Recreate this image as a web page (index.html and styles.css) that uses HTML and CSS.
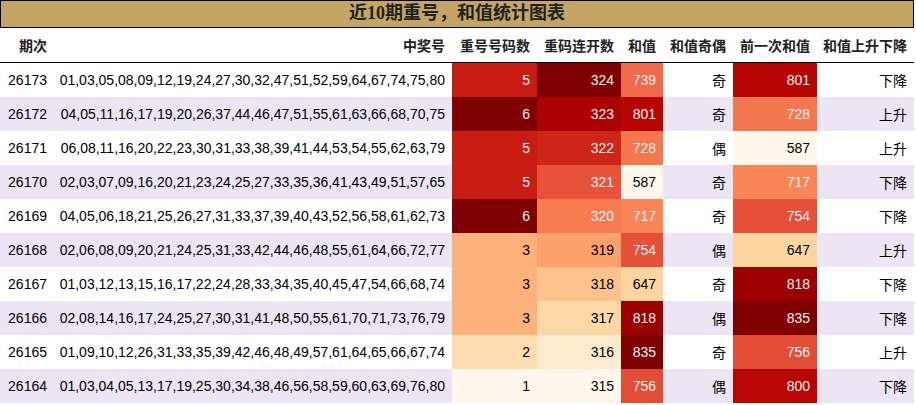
FILE: index.html
```html
<!DOCTYPE html>
<html lang="zh">
<head>
<meta charset="utf-8">
<title>近10期重号，和值统计图表</title>
<link rel="stylesheet" href="styles.css">
</head>
<body>
<div class="wrap">
  <div class="title">近10期重号，和值统计图表</div>
  <table class="stats">
    <colgroup>
      <col class="c-qi"><col class="c-num"><col class="c-rep"><col class="c-run"><col class="c-sum"><col class="c-odd"><col class="c-prev"><col class="c-trend">
    </colgroup>
    <thead>
      <tr><th>期次</th><th>中奖号</th><th>重号号码数</th><th>重码连开数</th><th>和值</th><th>和值奇偶</th><th>前一次和值</th><th>和值上升下降</th></tr>
    </thead>
    <tbody>
      <tr><td>26173</td><td>01,03,05,08,09,12,19,24,27,30,32,47,51,52,59,64,67,74,75,80</td><td class="lt" style="background:#c91d13">5</td><td class="lt" style="background:#7f0000">324</td><td class="lt" style="background:#f0694a">739</td><td>奇</td><td class="lt" style="background:#b70503">801</td><td>下降</td></tr>
      <tr><td>26172</td><td>04,05,11,16,17,19,20,26,37,44,46,47,51,55,61,63,66,68,70,75</td><td class="lt" style="background:#7f0000">6</td><td class="lt" style="background:#ad0000">323</td><td class="lt" style="background:#b70503">801</td><td>奇</td><td class="lt" style="background:#f57750">728</td><td>上升</td></tr>
      <tr><td>26171</td><td>06,08,11,16,20,22,23,30,31,33,38,39,41,44,53,54,55,62,63,79</td><td class="lt" style="background:#c91d13">5</td><td class="lt" style="background:#cf2518">322</td><td class="lt" style="background:#f57750">728</td><td>偶</td><td style="background:#fff7ec">587</td><td>上升</td></tr>
      <tr><td>26170</td><td>02,03,07,09,16,20,21,23,24,25,27,33,35,36,41,43,49,51,57,65</td><td class="lt" style="background:#c91d13">5</td><td class="lt" style="background:#e7533a">321</td><td style="background:#fff7ec">587</td><td>奇</td><td class="lt" style="background:#fa8556">717</td><td>下降</td></tr>
      <tr><td>26169</td><td>04,05,06,18,21,25,26,27,31,33,37,39,40,43,52,56,58,61,62,73</td><td class="lt" style="background:#7f0000">6</td><td class="lt" style="background:#f67b51">320</td><td class="lt" style="background:#fa8556">717</td><td>奇</td><td class="lt" style="background:#e65038">754</td><td>下降</td></tr>
      <tr><td>26168</td><td>02,06,08,09,20,21,24,25,31,33,42,44,46,48,55,61,64,66,72,77</td><td style="background:#fdb27b">3</td><td style="background:#fca16c">319</td><td class="lt" style="background:#e65038">754</td><td>偶</td><td style="background:#fdd5a1">647</td><td>上升</td></tr>
      <tr><td>26167</td><td>01,03,12,13,15,16,17,22,24,28,33,34,35,40,45,47,54,66,68,74</td><td style="background:#fdb27b">3</td><td style="background:#fdc38d">318</td><td style="background:#fdd5a1">647</td><td>奇</td><td class="lt" style="background:#9c0000">818</td><td>下降</td></tr>
      <tr><td>26166</td><td>02,08,14,16,17,24,25,27,30,31,41,48,50,55,61,70,71,73,76,79</td><td style="background:#fdb27b">3</td><td style="background:#fdd8a7">317</td><td class="lt" style="background:#9c0000">818</td><td>偶</td><td class="lt" style="background:#7f0000">835</td><td>下降</td></tr>
      <tr><td>26165</td><td>01,09,10,12,26,31,33,35,39,42,46,48,49,57,61,64,65,66,67,74</td><td style="background:#fddcaf">2</td><td style="background:#feeacc">316</td><td class="lt" style="background:#7f0000">835</td><td>奇</td><td class="lt" style="background:#e44d35">756</td><td>上升</td></tr>
      <tr><td>26164</td><td>01,03,04,05,13,17,19,25,30,34,38,46,56,58,59,60,63,69,76,80</td><td style="background:#fff7ec">1</td><td style="background:#fff7ec">315</td><td class="lt" style="background:#e44d35">756</td><td>偶</td><td class="lt" style="background:#b80604">800</td><td>下降</td></tr>
    </tbody>
  </table>
</div>
</body>
</html>
```
FILE: styles.css
```css
html, body {
  margin: 0;
  padding: 0;
  background: #ffffff;
}
.wrap {
  width: 914px;
}
.title {
  box-sizing: border-box;
  height: 28px;
  background: #c5a563;
  border: 1px solid #000;
  color: #222;
  font-family: "Liberation Serif", "Noto Sans CJK SC", serif;
  font-weight: bold;
  font-size: 18px;
  line-height: 25px;
  text-align: center;
}
.stats {
  width: 914px;
  border-collapse: collapse;
  table-layout: fixed;
  font-family: "Liberation Sans", "Noto Sans CJK SC", sans-serif;
  font-size: 14px;
  color: #000;
}
.c-qi { width: 52px; }
.c-num { width: 400px; }
.c-rep { width: 85px; }
.c-run { width: 84px; }
.c-sum { width: 42px; }
.c-odd { width: 70px; }
.c-prev { width: 84px; }
.c-trend { width: 97px; }
.stats th {
  height: 34px;
  padding: 0 7px 0 0;
  text-align: right;
  font-weight: bold;
  color: #222;
  border-bottom: 1px solid #000;
  white-space: nowrap;
}
.stats td {
  height: 34px;
  padding: 0 7px 0 0;
  text-align: right;
  white-space: nowrap;
  overflow: hidden;
}
.stats th:first-child,
.stats td:first-child {
  padding-right: 5px;
}
.stats tbody tr:nth-child(even) {
  background: #ebe5f4;
}
.stats td.lt {
  color: #f1f1f1;
}
```
